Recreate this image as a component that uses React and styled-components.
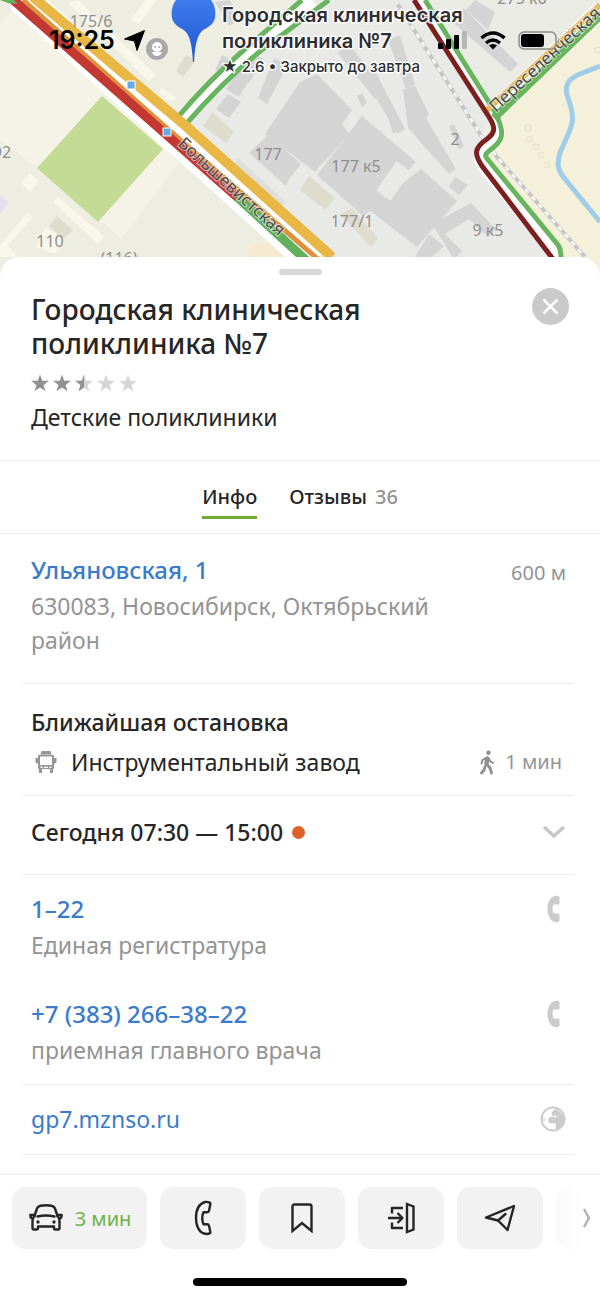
import { useState } from "react";
import styled, { createGlobalStyle } from "styled-components";

const point = {
  text: "#262626",
  gray: "#949494",
  light: "#cbcbcb",
  line: "#ebebeb",
  blue: "#3a7bce",
  green: "#6fb244",
};

const GlobalStyle = createGlobalStyle`
  * {
    box-sizing: border-box;
  }

  body {
    margin: 0;
    background-color: white;
    color: ${point.text};
    font-family: "Noto Sans", "Open Sans", sans-serif;
  }

  h1, h2, p {
    margin: 0;
  }

  button {
    border: 0;
    padding: 0;
    background: none;
    font: inherit;
    color: inherit;
    cursor: pointer;
  }

  a {
    text-decoration: none;
  }

  svg {
    display: block;
    flex-shrink: 0;
  }
`;

const Page = styled.div`
  display: flex;
  flex-direction: column;
  min-height: 100vh;
`;

const Header = styled.header`
  position: relative;
  height: 277px;
  overflow: hidden;
`;

const MapSvg = styled.svg`
  width: 100%;
  height: 100%;
`;

const StatusBar = styled.div`
  position: absolute;
  top: 24px;
  left: 0;
  right: 0;
  height: 32px;
  padding: 0 40px 0 49px;
  display: flex;
  align-items: center;
  justify-content: space-between;
  color: black;
  font-family: Inter, sans-serif;
  font-size: 25px;
  font-weight: 600;
`;

const StatusGroup = styled.div`
  display: flex;
  align-items: center;
  gap: ${(props) => props.$gap}px;
`;

const Sheet = styled.main`
  position: relative;
  flex: 1;
  margin-top: -20px;
  background-color: white;
  border-radius: 20px 20px 0 0;
`;

const Grabber = styled.div`
  width: 43px;
  height: 6px;
  margin: 0 auto;
  border-radius: 3px;
  background-color: #d8d8d8;
`;

const Top = styled.div`
  padding-top: 12px;
`;

const Intro = styled.section`
  display: flex;
  justify-content: space-between;
  align-items: flex-start;
  padding: 13px 31px 26px;
`;

const Title = styled.h1`
  font-size: 28px;
  line-height: 34px;
  font-weight: 500;
  max-width: 380px;
  padding-top: 4px;
`;

const Stars = styled.div`
  display: flex;
  gap: 4px;
  margin-top: 14px;
`;

const Category = styled.p`
  margin-top: 8px;
  font-size: 23px;
  line-height: 34px;
`;

const Close = styled.button`
  width: 37px;
  height: 37px;
  border-radius: 50%;
  background-color: #cacaca;
  display: flex;
  align-items: center;
  justify-content: center;
`;

const Tabs = styled.nav`
  display: flex;
  justify-content: center;
  gap: 32px;
  height: 74px;
  padding-top: 21px;
  border-top: 1px solid ${point.line};
  border-bottom: 1px solid ${point.line};
`;

const Tab = styled.button`
  height: 37px;
  font-size: 20px;
  line-height: 30px;
  font-weight: 500;
  display: flex;
  border-bottom: 3px solid ${(props) => (props.$active ? "#72ac35" : "transparent")};

  span {
    color: ${point.gray};
    margin-left: 8px;
  }
`;

const Section = styled.section`
  margin: 0 26px 0 23px;
  padding: ${(props) => props.$top}px 8px ${(props) => props.$bottom}px;
  border-bottom: 1px solid ${point.line};
`;

const Row = styled.div`
  display: flex;
  justify-content: space-between;
  align-items: ${(props) => props.$align || "center"};
`;

const Name = styled.h2`
  font-size: 23px;
  line-height: 36px;
  font-weight: 500;
`;

const Link = styled.a`
  display: block;
  color: ${point.blue};
  font-size: ${(props) => (props.$thin ? 23 : 24)}px;
  line-height: 38px;
  font-weight: ${(props) => (props.$thin ? 400 : 500)};
`;

const Note = styled.p`
  color: ${point.gray};
  font-size: 23px;
  line-height: 34px;
  max-width: 430px;
`;

const Aside = styled.div`
  display: flex;
  align-items: center;
  gap: 10px;
  padding-right: ${(props) => props.$right || 0}px;
  color: ${point.gray};
  font-size: 20px;
  line-height: 44px;
  white-space: nowrap;
`;

const Stop = styled.div`
  display: flex;
  align-items: center;
  gap: 14px;
  padding-left: 4px;
  font-size: 23px;
  line-height: 44px;
`;

const Hours = styled.button`
  width: 100%;
  display: flex;
  align-items: center;
  justify-content: space-between;
`;

const Today = styled.span`
  display: flex;
  align-items: center;
  gap: 9px;
  font-size: 23px;
  line-height: 36px;
  font-weight: 500;
`;

const Dot = styled.i`
  width: 13px;
  height: 13px;
  border-radius: 50%;
  background-color: #e0602b;
`;

const Phone = styled.div`
  & + & {
    margin-top: 33px;
  }
`;

const Footer = styled.footer`
  position: relative;
  padding: 12px 0 11px;
  background-color: white;
  border-top: 1px solid #f0f0f0;
  box-shadow: 0 -1px 3px rgba(0, 0, 0, 0.06);
`;

const Actions = styled.div`
  display: flex;
  gap: 13px;
  padding-left: 12px;
  overflow: hidden;
`;

const Action = styled.button`
  flex: none;
  width: ${(props) => (props.$wide ? 135 : 86)}px;
  height: 62px;
  border-radius: 13px;
  background-color: #f2f2f2;
  display: flex;
  align-items: center;
  justify-content: center;
  gap: 11px;
  color: ${point.green};
  font-size: 20px;
`;

const More = styled.button`
  position: absolute;
  top: 12px;
  right: 0;
  width: 50px;
  height: 62px;
  display: flex;
  align-items: center;
  justify-content: flex-end;
  padding-right: 9px;
  background: linear-gradient(to right, rgba(255, 255, 255, 0.5), white 32px);
`;

const HomeBar = styled.div`
  width: 214px;
  height: 8px;
  margin: 29px auto 0;
  border-radius: 4px;
  background-color: black;
`;

const STAR = "M10 0l2.500 6.900 7.300.2-5.800 4.500 2.100 7L10 14.500l-6.100 4.100 2.100-7L.2 7.100l7.300-.2z";

const Star = ({ fill }) => (
  <svg width="18" height="18" viewBox="0 0 20 19">
    <defs>
      <clipPath id="half">
        <path d="M0 0h10v20H0z" />
      </clipPath>
    </defs>
    <path d={STAR} fill={fill === 1 ? "#929292" : "#d6d6d6"} />
    {fill === 0.5 && <path d={STAR} fill="#929292" clipPath="url(#half)" />}
  </svg>
);

const HandsetIcon = () => (
  <svg width="24" height="28" viewBox="0 0 24 28">
    <path
      d="M13 1C8 2 5.500 8 5.500 14S8 26 13 27c1.500.3 2.800.2 3.800-.3.5-.2.700-.7.7-1.200V20c0-1-.6-1.500-1.500-1.500h-4.500c-1.300-3-1.300-6 0-9H16c.9 0 1.500-.5 1.500-1.500V2.500c0-.5-.2-1-.7-1.200-1-.5-2.300-.6-3.800-.3z"
      fill={point.light}
    />
  </svg>
);

const GlobeIcon = () => (
  <svg width="26" height="26" viewBox="0 0 26 26" fill={point.light}>
    <circle cx="13" cy="13" r="11.500" fill="none" stroke={point.light} strokeWidth="2" />
    <path d="M12 6.500l1.500-2.500L17 3l3 3 3 3 1 4-1 5-4 4.500-3 1-.5-2.500.5-2.500-2-1.500-3.500.5-2.500-2 .5-3 2.500-1.800 3-.2 1.500 1.200 1.500-.7-2-1.500-2 .5-1.500-1z" />
    <path d="M2 11l4 1.500-1 3H2z" opacity=".5" />
  </svg>
);

const BusIcon = () => (
  <svg width="22" height="24" viewBox="0 0 22 24" fill="#969696">
    <path d="M6.500 1h9l1 3.500h-11z" />
    <path
      fillRule="evenodd"
      d="M4.500 4.800h13c1 0 1.500.5 1.500 1.500v12.500h-1V23h-3v-4H7v4H4v-4.200H3V6.300c0-1 .5-1.500 1.500-1.500zm.5 1.700v8.500h12V6.500zM5.500 16.500V18h2v-1.500zm9 0V18h2v-1.500zM9 16.800V18h4v-1.200z"
    />
    <path d="M.5 8H3v5.500H1.800L.5 12zm21 0H19v5.500h1.200l1.300-1.500z" />
  </svg>
);

const WalkIcon = () => (
  <svg width="15" height="25" viewBox="0 0 15 25" fill="none" stroke="#8f8f8f" strokeLinecap="round" strokeLinejoin="round">
    <circle cx="8.500" cy="2.700" r="2.200" fill="#8f8f8f" stroke="none" />
    <path d="M7.200 8.500L6.500 14" strokeWidth="4.500" />
    <path d="M7 7.500l-4.500 2.500-1 3.500M8.500 8l2 3.500 2.500 1.500" strokeWidth="2" />
    <path d="M7.500 15l2.500 3 1.500 5M5 17l-1 3-2.500 3" strokeWidth="2.800" />
  </svg>
);

const iconProps = {
  fill: "none",
  stroke: "#252525",
  strokeWidth: 2.4,
  strokeLinejoin: "round",
  strokeLinecap: "round",
};

const CarIcon = () => (
  <svg width="36" height="28" viewBox="0 0 36 28" {...iconProps}>
    <path d="M6.500 12L9 4.500c.6-1.800 1.800-2.500 3.500-2.800 3.500-.6 7.500-.6 11 0 1.700.3 2.900 1 3.500 2.800l2.500 7.500" />
    <path d="M6.500 11H2.300c0 2 .5 3.200 2.200 3.500M29.500 11h4.200c0 2-.5 3.200-2.200 3.500" />
    <path d="M6.500 12c-1.500 1.500-2 3-2 5v7c0 1 .5 1.500 1.500 1.500h2.500c1 0 1.500-.5 1.500-1.500v-1.500h16V24c0 1 .5 1.500 1.500 1.500H30c1 0 1.500-.5 1.500-1.500v-7c0-2-.5-3.500-2-5" />
    <path d="M9.500 12.500c5.500-1.300 11.500-1.300 17 0" />
    <circle cx="10" cy="18" r="1.100" fill="#252525" strokeWidth="1.200" />
    <circle cx="26" cy="18" r="1.100" fill="#252525" strokeWidth="1.200" />
  </svg>
);

const CallIcon = () => (
  <svg width="18" height="36" viewBox="0 0 18 36" {...iconProps}>
    <path d="M11 2C4.500 4 2 11 2 18s2.500 14 8 15.500c2 .6 4 .5 5.500 0 .8-.3 1-1 .8-1.800l-1.300-6c-.2-1-1-1.500-2-1.500H9.500c-1.500-3.500-1.500-8.500 0-12H13c1 0 1.800-.5 2-1.500l1.300-6.500c.2-.8 0-1.500-.8-1.700-1.500-.5-3-.9-4.500-.5z" />
  </svg>
);

const BookmarkIcon = () => (
  <svg width="24" height="32" viewBox="0 0 24 32" {...iconProps}>
    <path d="M2.500 29V4.500c0-1.300.7-2 2-2h15c1.300 0 2 .7 2 2V29L12 21z" strokeLinejoin="miter" />
  </svg>
);

const EntranceIcon = () => (
  <svg width="28" height="32" viewBox="0 0 28 32" {...iconProps} strokeLinecap="butt">
    <path d="M5 11.500V6h11M5 20.500V26h11M1 16h14M10.500 11l5 5-5 5" />
    <path d="M20 2l6.500 2.500v23L20 30z" strokeLinejoin="miter" />
  </svg>
);

const SendIcon = () => (
  <svg width="32" height="28" viewBox="0 0 32 28" {...iconProps}>
    <path d="M2 13.500L30 2l-6.500 24L14 16.500z" />
    <path d="M14 16.500l7.500-6.500" />
  </svg>
);

const buildings = [
  "300 82l17-8 35 36-10 14 7 10-34 38-50-38z",
  "362 116l54 46-8 9-10-8-20 26 8 10-23 17-46-41z",
  "421 169l36 32-40 46-48-37z",
  "268 135l33 29-12 15-3 7-37-33z",
  "337 52l14-6 34 47-10 6z",
  "360 72l13-5 32 62-7 5z",
  "388 40l12-5 15 50-9 4z",
  "403 90l12-4 14 28-3 4 30 51-7 5-41-46z",
  "450 20l14-12 54 56-8 8z",
  "475 0l20 12-7 18-22-20z",
  "228 94l13 8-12 16-13-9z",
  "236 74l13 6-10 17-13-8z",
  "250 52l14 7-15 24-12-8z",
  "274 58l14 6-21 40-9-6z",
  "222 55l12 6-8 16-11-7z",
  "357 96l5-3 5 10-5 4z",
  "387 114l7-3 6 19-7 4z",
  "455 177l13 8-9 10-10-8z",
  "432 224l39-21 25 26-8 8-19-18-24 15 17 17-8 8z",
  "429 234l15 12-12 11h-17z",
  "215 2l15-2 8 20-9 6z",
  "449 126l5-2 10 22-5 4z",
];

const sheds = [
  "68 3l10-3 78 75-7 7z",
  "145 0l12 0-18 24-8-4z",
  "162 88l14 10-5 4-12-9z",
  "53 202l5-5 46 39-6 8z",
  "29 173l10 8-9 11-9-9z",
  "28 212l5 5-25 28 10 12H0v-12z",
  "45 228l18 10-8 16-20-7z",
];

const olive = [
  "212 112l22 20-8 11-23-17z",
  "300 190l9-14 26 22-10 12z",
  "340 214l12-6 26 30-7 9z",
  "57 216l16 14-10 9-14-13z",
  "186 55l10 5-13 17-7-6z",
];

const CityMap = () => (
  <MapSvg viewBox="0 0 600 277" preserveAspectRatio="xMidYMin slice" role="img" aria-label="Карта">
    <rect width="600" height="277" fill="#eeede2" />
    <path d="M0 25L15 6l171 147-65 86-16-15-7-2-61-54-37-28z" fill="#f5f3e8" />
    <path d="M187 120L314 0h103l75 110-15 45 85 122H345z" fill="#e9eae7" />
    <path d="M420 0h180L492 112z" fill="#ebebe6" />
    <path d="M493 118L600 18v259h-37l-78-120 17-22z" fill="#f5f0da" />
    <path d="M102 96l61 53-65 73-61-54z" fill="#c3db94" />
    <g fill="#f9f7ea">
      {sheds.map((d) => (
        <path key={d} d={`M${d}`} />
      ))}
    </g>
    <g fill="#dedccc">
      {olive.map((d) => (
        <path key={d} d={`M${d}`} />
      ))}
    </g>
    <g fill="#d4d4d5">
      {buildings.map((d) => (
        <path key={d} d={`M${d}`} />
      ))}
    </g>
    <path d="M379 190l18-26 11 8-18 26z" fill="none" stroke="#e9eae7" strokeWidth="4" />
    <path d="M0 194l8 9-8 11z" fill="#e3dfee" />
    <path d="M247 250l15-9 30 16h-45z" fill="#f5ead0" />
    <path d="M238 158l48 44-6 6-46-44z" fill="#dfdfd9" />
    <g fill="none" stroke="#e8e0c5">
      <circle cx="528" cy="128" r="3" />
      <circle cx="529" cy="139" r="3" />
      <circle cx="536" cy="147" r="3" />
      <circle cx="541" cy="155" r="3" />
      <circle cx="547" cy="165" r="3" />
      <circle cx="598" cy="50" r="3" />
    </g>
    <path d="M600 66l-20 8c-13 5-16 13-12 24 8 22 5 27-6 50-6 14-5 22 3 31l35 43" fill="none" stroke="#9fcde9" strokeWidth="5" />
    <g fill="none">
      <path d="M395 0l87 137 15 20 88 100" stroke="#c5c5c5" strokeWidth="4" />
      <path d="M395 0l87 137 15 20 88 100" stroke="#f4f4f4" strokeWidth="3" strokeDasharray="5 5" />
    </g>

    <g fill="none" stroke="white">
      <path d="M182 120q35-40 70-70L312 0" strokeWidth="16" />
      <path d="M420 0l71 112c13 22 8 27-5 37-8 6-7 11 0 20l72 88" strokeWidth="13" />
      <path d="M488 117L602 9" strokeWidth="18" />
    </g>
    <g fill="none" stroke="#68b45f" strokeWidth="5">
      <path d="M177 118q34-40 68-69L302 0" />
      <path d="M187 123q38-44 76-74L329 0" />
      <path d="M425 0l70 112c11 22 8 29-6 39-5 4-4 5 0 10l69 84q3 4 3 14" />
      <path d="M494 118L602 14" strokeWidth="8" />
    </g>
    <path d="M485 112L600 5" fill="none" stroke="#e3bd62" strokeWidth="6" />
    <path d="M414 0l75 117c7 11 6 16-2 22-13 9-13 15-5 27l71 93" fill="none" stroke="#7b201f" strokeWidth="5" />

    <path d="M20-4l294 266" stroke="white" strokeWidth="31" />
    <path d="M33-3l154 130 145 130" fill="none" stroke="#e9b743" strokeWidth="10" />
    <path d="M23 0l137 122 160 139" fill="none" stroke="#df923e" strokeWidth="5" />
    <path d="M10-3l150 132 78 69" fill="none" stroke="#c33931" strokeWidth="9" />
    <path d="M237 197l70 64" fill="none" stroke="#62b15a" strokeWidth="9" />
    <path d="M0 0h14l4 4-10-1z" fill="#62b15a" />
    <g fill="#68a9e4" stroke="white">
      <rect x="127" y="81" width="8" height="8" />
      <rect x="163" y="128" width="8" height="8" />
    </g>

    <g fill="#8e8e8c" fontSize="16" textAnchor="middle">
      <text x="91" y="27">175/6</text>
      <text x="2" y="158">92</text>
      <text x="50" y="247">110</text>
      <text x="119" y="264">(116)</text>
      <text x="268" y="160">177</text>
      <text x="356" y="172">177 к5</text>
      <text x="352" y="227">177/1</text>
      <text x="455" y="145">2</text>
      <text x="488" y="236">9 к5</text>
      <text x="522" y="4">275 к6</text>
    </g>
    <g fill="#4c4b48" fontSize="17" stroke="white" strokeOpacity=".6" strokeWidth="2" paintOrder="stroke">
      <text transform="translate(177 145) rotate(42)">Большевистская</text>
      <text transform="translate(496 113) rotate(-43)">Переселенческая</text>
    </g>

    <circle cx="157" cy="49" r="11" fill="#aaa9a7" />
    <circle cx="157" cy="47" r="5" fill="white" />
    <path d="M152 52h10q-1 4-5 4t-5-4z" fill="white" />
    <circle cx="155" cy="47" r="1" fill="#aaa9a7" />
    <circle cx="159" cy="47" r="1" fill="#aaa9a7" />

    <linearGradient id="pin" x1="0" y1="0" x2="0" y2="1">
      <stop offset="0" stopColor="#3e7ceb" />
      <stop offset="1" stopColor="#1f56d6" />
    </linearGradient>
    <path d="M176 0c-4 5-5 12-4 18 2 8 8 9 13 13 5 5 7 14 8 31h1c1-17 3-26 8-31 5-4 11-5 13-13 1-6 0-13-4-18z" fill="url(#pin)" />

    <g fill="#2d2d2f" stroke="white" strokeOpacity=".9" strokeWidth="3" paintOrder="stroke" strokeLinejoin="round" fontFamily="Inter, sans-serif" fontWeight="600">
      <text x="222" y="22" fontSize="20">Городская клиническая</text>
      <text x="222" y="48" fontSize="20">поликлиника №7</text>
      <text x="222" y="72" fontSize="15" fontWeight="500">★ 2.6 • Закрыто до завтра</text>
    </g>
  </MapSvg>
);

const Status = () => (
  <StatusBar>
    <StatusGroup $gap={9}>
      19:25
      <svg width="21" height="21" viewBox="0 0 21 21">
        <path d="M20.500.5L13 20.500l-2.500-9.500L.5 9z" fill="black" stroke="black" strokeLinejoin="round" />
      </svg>
    </StatusGroup>
    <StatusGroup $gap={12}>
      <svg width="30" height="19" viewBox="0 0 30 19">
        <rect y="12" width="5" height="6" rx="1" />
        <rect x="8" y="8" width="5" height="10" rx="1" />
        <rect x="16" y="4" width="5" height="14" rx="1" />
        <rect x="24" width="5" height="18" rx="1" fill="#b6b6b6" />
      </svg>
      <svg width="26" height="19" viewBox="0 0 26 19" fill="none" stroke="black">
        <path d="M1.500 7q11.500-10 23 0M6 12q7-6 14 0" strokeWidth="3.600" />
        <path d="M13 18.500l-4-4q4-3 8 0z" fill="black" stroke="none" />
      </svg>
      <svg width="42" height="19" viewBox="0 0 42 19">
        <rect x="1" y="1" width="37" height="17" rx="5" fill="none" stroke="#8d8d88" strokeWidth="1.500" />
        <rect x="3" y="3" width="23" height="13" rx="3" />
        <path d="M40 6q2 3.500 0 7z" fill="#8d8d88" />
      </svg>
    </StatusGroup>
  </StatusBar>
);

const phones = [
  { number: "1–22", href: "tel:122", note: "Единая регистратура" },
  { number: "+7 (383) 266–38–22", href: "tel:+73832663822", note: "приемная главного врача" },
];

const actions = [
  { label: "Позвонить", icon: <CallIcon /> },
  { label: "Сохранить", icon: <BookmarkIcon /> },
  { label: "Вход", icon: <EntranceIcon /> },
  { label: "Поделиться", icon: <SendIcon /> },
  { label: "Ещё", icon: null },
];

export default function App() {
  const [tab, setTab] = useState("info");

  return (
    <>
      <GlobalStyle />
      <Page>
        <Header>
          <CityMap />
          <Status />
        </Header>

        <Sheet>
          <Top>
            <Grabber />
          </Top>
          <Intro>
            <div>
              <Title>Городская клиническая поликлиника №7</Title>
              <Stars role="img" aria-label="2.6">
                {[1, 1, 0.5, 0, 0].map((fill, index) => (
                  <Star key={index} fill={fill} />
                ))}
              </Stars>
              <Category>Детские поликлиники</Category>
            </div>
            <Close aria-label="Закрыть">
              <svg width="17" height="17" viewBox="0 0 17 17">
                <path d="M1.500 1.500l14 14M15.500 1.500l-14 14" stroke="white" strokeWidth="2.500" />
              </svg>
            </Close>
          </Intro>

          <Tabs>
            <Tab $active={tab === "info"} onClick={() => setTab("info")}>
              Инфо
            </Tab>
            <Tab $active={tab === "reviews"} onClick={() => setTab("reviews")}>
              Отзывы<span>36</span>
            </Tab>
          </Tabs>

          <Section $top={17} $bottom={26}>
            <Row $align="flex-start">
              <div>
                <Link href="#address">Ульяновская, 1</Link>
                <Note>630083, Новосибирск, Октябрьский район</Note>
              </div>
              <Aside>600 м</Aside>
            </Row>
          </Section>

          <Section $top={20} $bottom={11}>
            <Name>Ближайшая остановка</Name>
            <Row>
              <Stop>
                <BusIcon />
                Инструментальный завод
              </Stop>
              <Aside $right={4}>
                <WalkIcon />1 мин
              </Aside>
            </Row>
          </Section>

          <Section $top={18} $bottom={24}>
            <Hours aria-label="Часы работы">
              <Today>
                Сегодня 07:30 — 15:00 <Dot />
              </Today>
              <svg width="24" height="14" viewBox="0 0 24 14">
                <path d="M2 2l10 9L22 2" fill="none" stroke="#c6c6c6" strokeWidth="3.500" />
              </svg>
            </Hours>
          </Section>

          <Section $top={15} $bottom={17}>
            {phones.map((phone) => (
              <Phone key={phone.number}>
                <Row>
                  <Link href={phone.href}>{phone.number}</Link>
                  <HandsetIcon />
                </Row>
                <Note>{phone.note}</Note>
              </Phone>
            ))}
          </Section>

          <Section $top={15} $bottom={16}>
            <Row>
              <Link $thin href="#site">
                gp7.mznso.ru
              </Link>
              <GlobeIcon />
            </Row>
          </Section>
        </Sheet>

        <Footer>
          <Actions>
            <Action $wide>
              <CarIcon />3 мин
            </Action>
            {actions.map((action) => (
              <Action key={action.label} aria-label={action.label}>
                {action.icon}
              </Action>
            ))}
          </Actions>
          <More aria-label="Дальше">
            <svg width="8" height="20" viewBox="0 0 8 20">
              <path d="M1 1l5 9-5 9" fill="none" stroke="#b3b3b3" strokeWidth="2.500" />
            </svg>
          </More>
          <HomeBar />
        </Footer>
      </Page>
    </>
  );
}
